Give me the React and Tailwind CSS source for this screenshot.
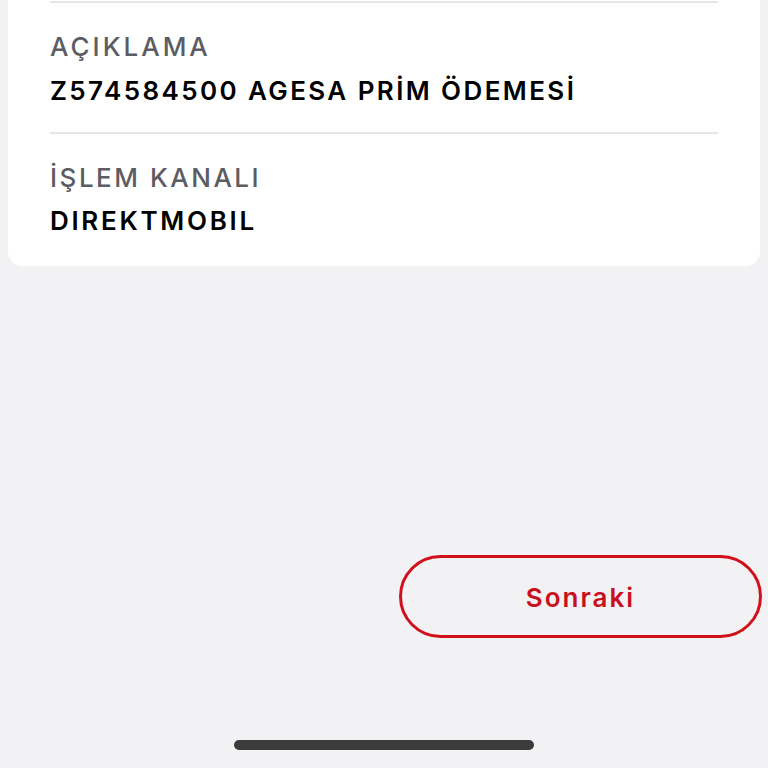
export default function App() {
  const font = { fontFamily: 'Inter, "Noto Sans", sans-serif' };
  return (
    <div className="w-[768px] h-[768px] bg-[#f2f2f4] flex flex-col overflow-hidden" style={font}>
      <div className="mx-2 bg-white rounded-b-[14px] px-[42px] pb-[29px]">
        <div className="border-t-2 border-[#e6e6ea] mt-[1px] pt-[28px] pb-[25px]">
          <div className="text-[26px] leading-[32px] font-medium text-[#5c5c63] tracking-[3px]">AÇIKLAMA</div>
          <div className="mt-[12px] text-[26px] leading-[32px] font-semibold text-black tracking-[2.4px]">Z574584500 AGESA PRİM ÖDEMESİ</div>
        </div>
        <div className="border-t-2 border-[#e6e6ea] pt-[28px]">
          <div className="text-[26px] leading-[32px] font-medium text-[#5c5c63] tracking-[2.5px]">İŞLEM KANALI</div>
          <div className="mt-[11px] text-[26px] leading-[32px] font-semibold text-black tracking-[2.7px]">DIREKTMOBIL</div>
        </div>
      </div>
      <div className="flex justify-end pr-[6px] mt-[289px]">
        <div className="w-[363px] h-[83px] rounded-full border-[3px] border-[#d0101b] flex items-center justify-center text-[26px] font-semibold text-[#c8101e] tracking-[2px] pt-[2px]">
          Sonraki
        </div>
      </div>
      <div className="flex justify-center mt-[102px]">
        <div className="w-[300px] h-[10px] rounded-full bg-[#3c3c3c]" />
      </div>
    </div>
  );
}
